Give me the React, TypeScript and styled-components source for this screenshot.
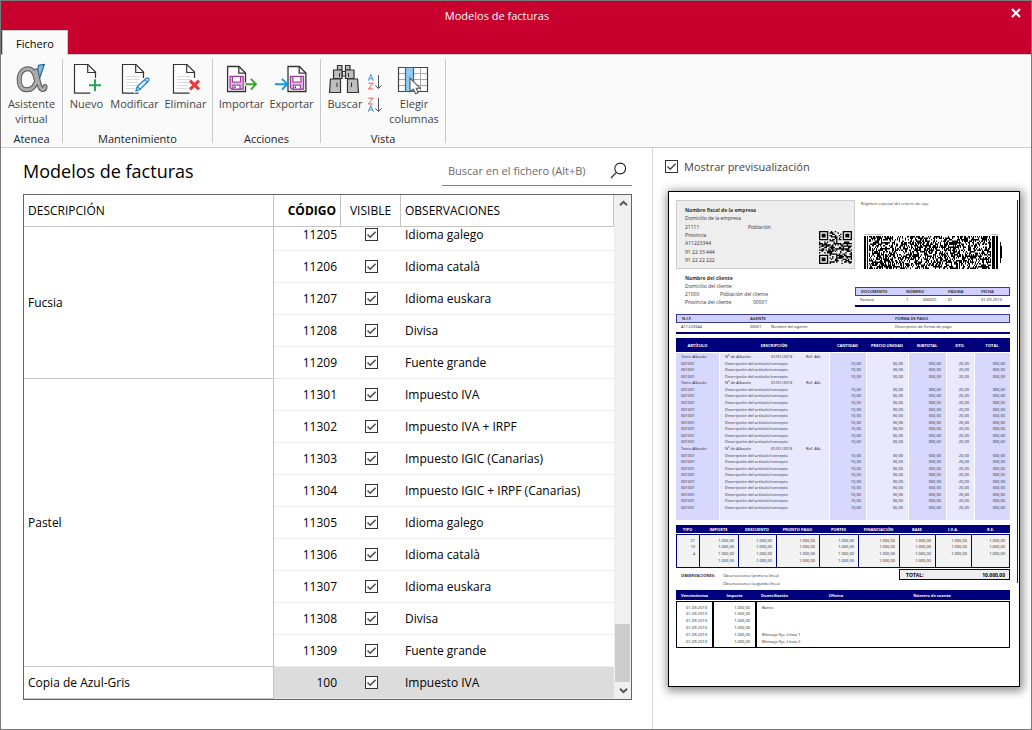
import React, { useLayoutEffect, useRef, useState } from "react";
import styled, { createGlobalStyle, css } from "styled-components";

const GlobalStyle = createGlobalStyle`
  *, *::before, *::after { box-sizing: border-box; }
  body { margin: 0; background: #fff; }
  body, button, input { font-family: "Open Sans", "Noto Sans", sans-serif; font-size: 11px; }
`;

/* ---------- window ---------- */

const Window = styled.div`
  display: flex;
  flex-direction: column;
  height: 100vh;
  border: 1px solid #7a7a7a;
  background: #fff;
  color: #000;
`;

const TitleBar = styled.header`
  display: grid;
  grid-template-columns: 30px 1fr 30px;
  align-items: center;
  height: 29px;
  background: #c8002d;
  color: #fff;
`;

const WindowTitle = styled.div`
  grid-column: 2;
  text-align: center;
  padding-right: 38px;
`;

const CloseButton = styled.button`
  display: flex;
  align-items: center;
  justify-content: center;
  height: 23px;
  padding: 0;
  border: 0;
  background: none;
  align-self: start;
`;

const TabStrip = styled.nav`
  display: flex;
  height: 24px;
  padding-left: 1px;
  background: #c8002d;
`;

const Tab = styled.button`
  width: 66px;
  height: 25px;
  padding: 0;
  border: 1px solid #c8c8c8;
  border-bottom: 0;
  background: #fafafa;
  color: #000;
  z-index: 1;
`;

/* ---------- ribbon ---------- */

const Ribbon = styled.div`
  display: flex;
  height: 94px;
  padding: 4px 0;
  border-top: 1px solid #c8c8c8;
  border-bottom: 1px solid #c8c8c8;
  background: #fafafa;
`;

const Group = styled.section<{ $width: number }>`
  display: flex;
  flex-direction: column;
  justify-content: space-between;
  width: ${(p) => p.$width}px;
  border-right: 1px solid #c8c8c8;
`;

const GroupTools = styled.div`
  display: flex;
  justify-content: center;
  padding-top: 3px;
`;

const GroupCaption = styled.div`
  text-align: center;
  line-height: 8px;
  color: #222;
`;

const ToolButton = styled.button<{ $width: number }>`
  display: flex;
  flex-direction: column;
  align-items: center;
  gap: 2px;
  flex: none;
  width: ${(p) => p.$width}px;
  padding: 0;
  border: 0;
  background: none;
  color: #444;
  line-height: 15px;
  white-space: pre-line;
`;

const SortTools = styled.div`
  display: flex;
  flex-direction: column;
  gap: 7px;
  width: 16px;
  padding-top: 12px;
`;

const SortButton = styled.button`
  height: 16px;
  padding: 0;
  border: 0;
  background: none;
  line-height: 0;
`;

/* ---------- body ---------- */

const Body = styled.main`
  display: grid;
  grid-template-columns: minmax(0, 1fr) 378px;
  flex: 1;
  min-height: 0;
`;

const ListPane = styled.section`
  display: flex;
  flex-direction: column;
  min-height: 0;
  padding: 8px 20px 29px 22px;
  border-right: 1px solid #d8d8d8;
`;

const ListHeader = styled.div`
  display: flex;
  justify-content: space-between;
  height: 38px;
`;

const Heading = styled.h1`
  margin: 0;
  font-size: 18px;
  font-weight: 400;
  line-height: 31px;
`;

const SearchBox = styled.label`
  display: flex;
  align-items: center;
  width: 190px;
  height: 30px;
  padding: 0 5px 0 6px;
  border-bottom: 1px solid #808080;
`;

const SearchInput = styled.input`
  flex: 1;
  min-width: 0;
  padding: 0;
  border: 0;
  outline: 0;
  background: none;
  &::placeholder { color: #6a6a6a; opacity: 1; }
`;

const ListFrame = styled.div`
  display: flex;
  flex: 1;
  min-height: 0;
  border: 1px solid #646464;
`;

const Scroller = styled.div`
  flex: 1;
  min-width: 0;
  overflow-y: auto;
  scrollbar-width: none;
`;

const ModelTable = styled.table`
  width: 100%;
  table-layout: fixed;
  border-collapse: separate;
  border-spacing: 0;
  font-size: 12px;
`;

const HeadCell = styled.th<{ $align?: string; $strong?: boolean }>`
  position: sticky;
  top: 0;
  z-index: 1;
  height: 32px;
  padding: 0 4px;
  border-right: 1px solid #c4c4c4;
  border-bottom: 1px solid #c4c4c4;
  background: #fff;
  text-align: ${(p) => p.$align || "left"};
  font-weight: ${(p) => (p.$strong ? 700 : 400)};
`;

const GroupCell = styled.td`
  padding: 0 4px;
  border-right: 1px solid #c4c4c4;
  border-bottom: 1px solid #c4c4c4;
  background: #fff;
`;

const Row = styled.tr<{ $selected?: boolean }>`
  background: ${(p) => (p.$selected ? "#dcdcdc" : "#fff")};
`;

const Cell = styled.td<{ $align?: string }>`
  height: 32px;
  padding: 0 4px;
  border-bottom: 1px solid #ececec;
  text-align: ${(p) => p.$align || "left"};
  line-height: 16px;
`;

const Check = styled.input.attrs({ type: "checkbox" })`
  appearance: none;
  display: block;
  flex: none;
  width: 13px;
  height: 13px;
  margin: 0;
  border: 1px solid #333;
  background: #fff;
  ${Cell} & { margin: 0 auto; }
  &:checked {
    background: #fff
      url("data:image/svg+xml,%3Csvg xmlns='http://www.w3.org/2000/svg' viewBox='0 0 11 11'%3E%3Cpath d='M1.5 5.5l2.7 2.8 5.4-5.6' fill='none' stroke='%23444' stroke-width='1.4'/%3E%3C/svg%3E")
      center / 11px 11px no-repeat;
  }
`;

const ScrollBar = styled.div`
  display: flex;
  flex-direction: column;
  width: 17px;
  padding-left: 1px;
  background: #f0f0f0;
`;

const ScrollArrow = styled.button`
  height: 17px;
  padding: 0;
  border: 0;
  background: none;
  line-height: 0;
`;

const ScrollTrack = styled.div`
  display: flex;
  flex: 1;
  align-items: flex-end;
`;

const ScrollThumb = styled.div`
  width: 15px;
  height: 58px;
  background: #cdcdcd;
`;

/* ---------- preview ---------- */

const PreviewPane = styled.section`
  padding: 8px 11px 12px 12px;
  overflow: hidden;
`;

const PreviewToggle = styled.label`
  display: flex;
  align-items: center;
  gap: 6px;
  height: 20px;
  margin-bottom: 15px;
  color: #444;
`;

const Sheet = styled.article`
  display: flex;
  gap: 7px;
  margin-left: 3px;
  padding: 8px 1px 38px 7px;
  border: 1px solid #000;
  background: #fff;
  box-shadow: 1px 2px 9px 2px rgba(0, 0, 0, 0.45);
  font-size: 4px;
  line-height: 6px;
  color: #333;
  td { font-family: "Noto Sans", "Open Sans", sans-serif; }
`;

const SheetContent = styled.div`
  flex: 1;
  min-width: 0;
`;

const SheetRule = styled.div`
  width: 1px;
  height: 383px;
  background: #222;
`;

const Split = styled.div`
  display: grid;
  grid-template-columns: 179px minmax(0, 1fr);
`;

const CompanyBox = styled.div`
  display: flex;
  justify-content: space-between;
  align-items: flex-end;
  height: 69px;
  padding: 5px 2px 4px 8px;
  border: 1px solid #ccc;
  background: #eee;
`;

const Lines = styled.div`
  display: flex;
  flex-direction: column;
  font-size: 5px;
  line-height: 8px;
`;

const Pair = styled.div<{ $first: number }>`
  display: grid;
  grid-template-columns: ${(p) => p.$first}px auto;
`;

const CompanyLines = styled(Lines)`
  height: 100%;
  justify-content: space-between;
`;

const TaxSide = styled.div`
  display: flex;
  flex-direction: column;
  justify-content: space-between;
  height: 69px;
  padding: 1px 8px 0 6px;
`;

const CodeCaption = styled.div`
  display: flex;
  justify-content: space-between;
  height: 3px;
  padding-right: 4px;
  font-size: 2px;
  line-height: 3px;
`;

const CodeBlock = styled.div`
  padding-left: 3px;
  svg { display: block; }
`;

const ClientLines = styled(Lines)`
  padding: 5px 0 0 9px;
`;

const BoxTable = styled.table`
  width: 100%;
  table-layout: fixed;
  border-collapse: separate;
  border-spacing: 0;
  font-size: 4px;
  line-height: 6px;
  border-bottom: 2px solid #00007c;
  th {
    height: 9px;
    padding: 0;
    border: solid #3a3aa0;
    border-width: 1px 0;
    background: #d0d0ff;
    text-align: left;
  }
  th:first-child { border-left-width: 1px; }
  th:last-child { border-right-width: 1px; }
  td { height: 9px; padding: 0 1px 2px 0; }
  th:first-child, td:first-child { padding-left: 5px; }
`;

const DocumentBox = styled.div`
  padding-top: 18px;
`;

const PartyBox = styled.div`
  padding: 7px 0 4px;
`;

const navyHead = css`
  background: #00007c;
  color: #fff;
  font-weight: 700;
`;

const ItemTable = styled.table`
  width: 100%;
  height: 182px;
  table-layout: fixed;
  border-collapse: separate;
  border-spacing: 0;
  font-size: 4px;
  line-height: 5px;
  thead th { ${navyHead} height: 14px; padding: 0; }
  td { padding: 0 5px; text-align: right; white-space: nowrap; border-left: 1px solid #fff; }
  td:first-child { border-left: 0; }
  td:nth-child(odd) { background: #d8d8ff; }
  td:nth-child(even) { background: #e8e8ff; }
  td:nth-child(-n + 2) { text-align: left; }
  tbody tr:first-child td { border-top: 1px solid #fff; }
  tfoot td { height: 9px; }
`;

const NoteText = styled.div`
  display: grid;
  grid-template-columns: 46px 35px auto;
`;

const TotalsTable = styled.table`
  width: 100%;
  margin-top: 5px;
  table-layout: fixed;
  border-collapse: separate;
  border-spacing: 0;
  font-size: 4px;
  line-height: 5px;
  thead th { ${navyHead} height: 9px; padding: 0; border-bottom: 1px solid #fff; }
  td {
    height: 7px;
    padding: 0 4px;
    text-align: right;
    background: #f3f3f3;
    border-left: 1px solid #00007c;
  }
  td:last-child { border-right: 1px solid #00007c; }
  tbody tr:first-child td { height: 9px; padding-top: 2px; border-top: 1px solid #00007c; }
  tbody tr:last-child td { height: 11px; padding-bottom: 3px; border-bottom: 1px solid #00007c; }
`;

const Summary = styled.div`
  display: grid;
  grid-template-columns: 5px 42px minmax(0, 1fr) 111px;
  height: 21px;
  margin-top: 1px;
`;

const SummaryText = styled.div`
  padding-top: 3px;
  line-height: 8px;
`;

const TotalBox = styled.div`
  display: flex;
  justify-content: space-between;
  align-items: center;
  height: 11px;
  padding: 0 4px 0 6px;
  border: 1px solid #00007c;
  background: #eee;
  color: #000;
  font-size: 5px;
  font-weight: 700;
`;

const DueTable = styled.table`
  width: 100%;
  table-layout: fixed;
  border-collapse: separate;
  border-spacing: 0;
  font-size: 4px;
  line-height: 5px;
  thead th { ${navyHead} height: 11px; padding: 0; border-bottom: 1px solid #fff; }
  thead th:nth-child(3) { text-align: left; padding-left: 5px; }
  td { height: 7px; padding: 0 5px; border-left: 1px solid #000; white-space: nowrap; }
  td:nth-child(-n + 2) { border-right: 1px solid #000; text-align: right; }
  td:nth-child(n + 4) { border-left: 0; }
  td:last-child { border-right: 1px solid #000; }
  tbody tr:first-child td { height: 9px; padding-top: 2px; border-top: 1px solid #000; }
  tbody tr:last-child td { height: 10px; padding-bottom: 3px; border-bottom: 1px solid #000; }
`;

/* ---------- icons ---------- */

const Icon = ({ children }: { children: React.ReactNode }) => (
  <svg width="32" height="32" viewBox="1 0 32 32" fill="none" overflow="visible" aria-hidden="true">
    {children}
  </svg>
);

const Page = ({ lines }: { lines?: boolean }) => (
  <>
    <path d="M4.5 2.5H18L25.5 10V31.2H4.5Z" fill="#fff" />
    <path d="M25.5 16V10L18 2.5H4.5V31.2H20.5" stroke="#333" strokeWidth="1.2" />
    <path d="M17.7 2.8V10.5H25.4" stroke="#333" strokeWidth="1.2" />
    {lines && <path d="M8 14.5H22M8 17.5H22M8 20.5H20M8 23.5H18M8 26.5H18" stroke="#dcdcdc" />}
  </>
);

const alphaStroke =
  "M21 9C24 22 24.5 28 28.6 27.4 29.6 27 30 26 30 24.5M22.5 16C20.5 24.5 16 28 11.5 27.8 6 27.6 4 23 4.2 17.5 4.4 10.5 8.2 6.8 13 6.8 18 6.8 20 12 21 17";

const AlphaIcon = () => (
  <Icon>
    <path d="M29.3 2.5L23.8 18.5 21.8 13 23.5 3.2Z" fill="#7dbcf0" stroke="#1b5c98" strokeWidth="1.1" />
    <g strokeLinecap="round" strokeLinejoin="round">
      <path d={alphaStroke} stroke="#555" strokeWidth="5" />
      <path d={alphaStroke} stroke="#ababab" strokeWidth="3" />
    </g>
  </Icon>
);

const NewIcon = () => (
  <Icon>
    <Page />
    <path d="M25 17V29.5M19 23.2H31.2" stroke="#fafafa" strokeWidth="4" />
    <path d="M25 17.3V29.2M19 23.2H31" stroke="#18a74c" strokeWidth="1.9" />
  </Icon>
);

const EditIcon = () => (
  <Icon>
    <Page lines />
    <path d="M18 29L19.3 24.3 28.3 16.3Q30.3 15.5 31 17.3 31.2 18.6 30 19.6L22 27.5Z" fill="#fff" stroke="#fafafa" strokeWidth="3" />
    <path d="M18 29L19.3 24.3 28.3 16.3Q30.3 15.5 31 17.3 31.2 18.6 30 19.6L22 27.5Z" fill="#d9ecfa" stroke="#2486c8" strokeWidth="1.3" />
    <path d="M19.3 24.3L22.3 27.5M27 17.8L29.5 20.3" stroke="#2486c8" strokeWidth="1.2" />
  </Icon>
);

const DeleteIcon = () => (
  <Icon>
    <Page lines />
    <path d="M21 18.5L30 27.5M30 18.5L21 27.5" stroke="#fafafa" strokeWidth="5" />
    <path d="M21 18.6L30 27.4M30 18.6L21 27.4" stroke="#ee3a38" strokeWidth="3.2" />
  </Icon>
);

const DiskPage = () => (
  <>
    <path d="M.6 4.5H12L18.5 11V29.5H.6Z" fill="#fff" stroke="#333" strokeWidth="1.3" />
    <path d="M11.8 4.8V11.2H18.3" stroke="#333" strokeWidth="1.3" />
    <path d="M3 14.3H16.2V27.2H4.5L3 25.7Z" fill="#deb5e0" stroke="#9a3d9d" strokeWidth="1.2" />
    <path d="M5.5 14.5H13.5V20H5.5Z" fill="#fff" stroke="#9a3d9d" strokeWidth="1.1" />
    <path d="M6 23.2H13V27H6Z" fill="#fff" stroke="#9a3d9d" strokeWidth="1.1" />
    <path d="M8 24.5V26" stroke="#333" strokeWidth="1.3" />
  </>
);

const ImportIcon = () => (
  <Icon>
    <g transform="translate(2 0)"><DiskPage /></g>
    <path d="M19.5 22.2H31M25.8 16.8L31 22.2 25.8 27.6" stroke="#fafafa" strokeWidth="3.6" />
    <path d="M20.5 22.2H31M25.8 16.8L31 22.2 25.8 27.6" stroke="#3aa428" strokeWidth="1.9" />
  </Icon>
);

const ExportIcon = () => (
  <Icon>
    <g transform="translate(12.4 0)"><DiskPage /></g>
    <path d="M0 22.2H12.5M7 16.8L12.3 22.2 7 27.6" stroke="#0a9be0" strokeWidth="1.9" />
  </Icon>
);

const BinocularsIcon = () => (
  <Icon>
    <g fill="#bfbfbf" stroke="#333" strokeWidth="1.2">
      <path d="M9.5 3.5H14V8H9.5ZM17.5 3.5H22V8H17.5Z" />
      <path d="M14.5 9.5H17.5V14H14.5Z" fill="#fff" />
      <path d="M5.5 8H14V16.5H5.5ZM17.5 8H26V16.5H17.5Z" />
      <path d="M2.5 17H12.5V30.5H1.5ZM19.5 17H29.5L30.5 30.5H19.5Z" />
    </g>
    <path d="M11.5 11V15M20.5 11V15M9 20.5V25M23.5 20.5V25" stroke="#333" />
  </Icon>
);

const ColumnsIcon = () => (
  <Icon>
    <path d="M1.5 5.5H30.5V29.5H1.5Z" fill="#fff" />
    <path d="M1.5 11.5H30.5M1.5 17.5H30.5M1.5 23.5H30.5M23.5 5.5V29.5" stroke="#a8a8a8" />
    <path d="M1.5 5.5H30.5V29.5H1.5Z" stroke="#444" strokeWidth="1.2" />
    <path d="M8.5 5.5H16.5V29.5H8.5Z" fill="#93c9f0" stroke="#1b6ead" strokeWidth="1.2" />
    <path d="M13 16V29.8L16.2 27 18.7 31.8 21.3 30.5 19.2 26.2H23.2Z" fill="#fff" stroke="#555" strokeWidth="1.1" />
  </Icon>
);

const SortIcon = ({ descending }: { descending?: boolean }) => (
  <svg width="16" height="16" viewBox="1 0 16 16" fill="none" aria-hidden="true">
    <path d="M1.2 6.8L3.8.6 6.5 6.8M2.1 4.8H5.5" stroke="#3d93cf" transform={descending ? "translate(0 8)" : undefined} />
    <path d="M1.4 9.2H6.1L1.4 15H6.3" stroke="#e85c5c" transform={descending ? "translate(0 -8)" : undefined} />
    <path d="M11.5 1V14.5M8.3 11.3L11.5 14.5 14.7 11.3" stroke="#555" />
  </svg>
);

const SearchIcon = () => (
  <svg width="17" height="17" viewBox="0 0 17 17" fill="none" stroke="#222" strokeWidth="1.1" aria-hidden="true">
    <circle cx="10.2" cy="6.5" r="5.4" />
    <path d="M6.4 10.4L1 16" />
  </svg>
);

const Chevron = ({ up }: { up?: boolean }) => (
  <svg width="9" height="9" viewBox="0 0 9 9" fill="none" stroke="#555" strokeWidth="2" aria-hidden="true">
    <path d={up ? "M1 6.2L4.5 2.8 8 6.2" : "M1 2.8L4.5 6.2 8 2.8"} />
  </svg>
);

/* deterministic module noise for the two printed codes */
const noise = (seed: number) => {
  let s = seed;
  return () => {
    s = (s * 1103515245 + 12345) % 2147483648;
    return s / 2147483648;
  };
};

const qrPath = (() => {
  const rnd = noise(7);
  const n = 25;
  let d = "";
  const finder = (x: number, y: number) => (x < 8 && y < 8) || (x > n - 9 && y < 8) || (x < 8 && y > n - 9);
  for (let y = 0; y < n; y++)
    for (let x = 0; x < n; x++) if (rnd() > 0.48 && !finder(x, y)) d += `M${x} ${y}h1v1h-1z`;
  [[0, 0], [n - 7, 0], [0, n - 7]].forEach(([x, y]) => {
    d += `M${x} ${y}h7v7h-7zM${x + 1} ${y + 1}v5h5v-5zM${x + 2} ${y + 2}h3v3h-3z`;
  });
  return d;
})();

const QrCode = () => (
  <svg width="33" height="33" viewBox="0 0 25 25" role="img" aria-label="QR"><path d={qrPath} /></svg>
);

const stackedPath = (() => {
  const rnd = noise(21);
  let d = "M0 0h2v33h-2zM3 0h1v33h-1zM128 0h3v33h-3zM132 0h2v33h-2zM136 6h1v21h-1zM137 10h1v12h-1z";
  for (let y = 0; y < 33; y += 1.5)
    for (let x = 5; x < 127; x++) if (rnd() > 0.46) d += `M${x} ${y}h1v1.5h-1z`;
  return d;
})();

const StackedCode = () => (
  <svg width="100%" height="33" viewBox="0 0 138 33" preserveAspectRatio="none" role="img" aria-label="Código">
    <path d={stackedPath} />
  </svg>
);

/* ---------- data ---------- */

type Model = { code: string; note: string; selected?: boolean };
const groups: { name: string; models: Model[] }[] = [
  {
    name: "Fucsia",
    models: [
      { code: "11205", note: "Idioma galego" },
      { code: "11206", note: "Idioma català" },
      { code: "11207", note: "Idioma euskara" },
      { code: "11208", note: "Divisa" },
      { code: "11209", note: "Fuente grande" },
    ],
  },
  {
    name: "Pastel",
    models: [
      { code: "11301", note: "Impuesto IVA" },
      { code: "11302", note: "Impuesto IVA + IRPF" },
      { code: "11303", note: "Impuesto IGIC (Canarias)" },
      { code: "11304", note: "Impuesto IGIC + IRPF (Canarias)" },
      { code: "11305", note: "Idioma galego" },
      { code: "11306", note: "Idioma català" },
      { code: "11307", note: "Idioma euskara" },
      { code: "11308", note: "Divisa" },
      { code: "11309", note: "Fuente grande" },
    ],
  },
  { name: "Copia de Azul-Gris", models: [{ code: "100", note: "Impuesto IVA", selected: true }] },
];

const itemBlocks = [3, 9, 9];
const totals = [
  ["21", "10", "4", ""],
  ...Array.from({ length: 6 }, () => Array(4).fill("1.000,00")),
  ["1.000,00", "1.000,00", "1.000,00", ""],
  ["1.000,00", "1.000,00", "1.000,00", ""],
];
const totalHeads = ["TIPO", "IMPORTE", "DESCUENTO", "PRONTO PAGO", "PORTES", "FINANCIACIÓN", "BASE", "I.V.A.", "R.E."];
const dueNotes = ["Banco", "", "", "", "Mensaje fijo. Línea 1", "Mensaje fijo. Línea 2"];

const Columns = ({ widths }: { widths: (number | undefined)[] }) => (
  <colgroup>{widths.map((w, i) => <col key={i} width={w} />)}</colgroup>
);

/* ---------- parts ---------- */

const ModelList = () => {
  const scroller = useRef<HTMLDivElement>(null);
  const [hidden, setHidden] = useState(0);

  useLayoutEffect(() => {
    const el = scroller.current!;
    el.scrollTop = el.scrollHeight;
    setHidden(el.scrollTop);
  }, []);

  return (
    <ListFrame>
      <Scroller ref={scroller} onScroll={(e) => setHidden(e.currentTarget.scrollTop)}>
        <ModelTable>
          <Columns widths={[250, 67, 60, undefined]} />
          <thead>
            <tr>
              <HeadCell>DESCRIPCIÓN</HeadCell>
              <HeadCell $align="right" $strong>CÓDIGO</HeadCell>
              <HeadCell $align="center">VISIBLE</HeadCell>
              <HeadCell>OBSERVACIONES</HeadCell>
            </tr>
          </thead>
          <tbody>
            {groups.map((g, gi) =>
              g.models.map((m, i) => (
                <Row key={m.code} $selected={m.selected}>
                  {i === 0 && (
                    <GroupCell
                      rowSpan={g.models.length}
                      style={gi === 0 ? { paddingTop: Math.min(hidden, 140) } : undefined}
                    >
                      {g.name}
                    </GroupCell>
                  )}
                  <Cell $align="right">{m.code}</Cell>
                  <Cell><Check defaultChecked aria-label={`Visible ${m.code}`} /></Cell>
                  <Cell>{m.note}</Cell>
                </Row>
              ))
            )}
          </tbody>
        </ModelTable>
      </Scroller>
      <ScrollBar>
        <ScrollArrow aria-label="Subir"><Chevron up /></ScrollArrow>
        <ScrollTrack><ScrollThumb /></ScrollTrack>
        <ScrollArrow aria-label="Bajar"><Chevron /></ScrollArrow>
      </ScrollBar>
    </ListFrame>
  );
};

const Invoice = () => (
  <Sheet>
    <SheetContent>
      <Split>
        <CompanyBox>
          <CompanyLines>
            <b>Nombre fiscal de la empresa</b>
            <span>Domicilio de la empresa</span>
            <Pair $first={63}><span>21111</span><span>Población</span></Pair>
            <span>Provincia</span>
            <span>A11223344</span>
            <span>91 22 33 444</span>
            <span>91 22 22 222</span>
          </CompanyLines>
          <QrCode />
        </CompanyBox>
        <TaxSide>
          <span>Régimen especial del criterio de caja</span>
          <CodeBlock>
            <CodeCaption><span>Código de la factura</span><span>00 00 0</span></CodeCaption>
            <StackedCode />
          </CodeBlock>
        </TaxSide>
      </Split>
      <Split>
        <ClientLines>
          <b>Nombre del cliente</b>
          <span>Domicilio del cliente</span>
          <Pair $first={35}><span>21000</span><span>Población del cliente</span></Pair>
          <Pair $first={68}><span>Provincia del cliente</span><span>00001</span></Pair>
        </ClientLines>
        <DocumentBox>
          <BoxTable>
            <Columns widths={[51, 17, 25, 33, undefined]} />
            <thead>
              <tr><th>DOCUMENTO</th><th colSpan={2}>NÚMERO</th><th>PÁGINA</th><th>FECHA</th></tr>
            </thead>
            <tbody>
              <tr><td>Factura</td><td>1</td><td>000001</td><td>01</td><td>01-09-2013</td></tr>
            </tbody>
          </BoxTable>
        </DocumentBox>
      </Split>
      <PartyBox>
        <BoxTable>
          <Columns widths={[74, 21, 124, undefined]} />
          <thead>
            <tr><th>N.I.F.</th><th colSpan={2}>AGENTE</th><th>FORMA DE PAGO</th></tr>
          </thead>
          <tbody>
            <tr><td>A11223344</td><td>00001</td><td>Nombre del agente</td><td>Descripción de forma de pago</td></tr>
          </tbody>
        </BoxTable>
      </PartyBox>
      <ItemTable>
        <Columns widths={[43, undefined, 37, 42, 38, 28, 36]} />
        <thead>
          <tr>
            <th>ARTÍCULO</th><th>DESCRIPCIÓN</th><th>CANTIDAD</th><th>PRECIO UNIDAD</th>
            <th>SUBTOTAL</th><th>DTO.</th><th>TOTAL</th>
          </tr>
        </thead>
        <tbody>
          {itemBlocks.map((count, b) => (
            <React.Fragment key={b}>
              <tr>
                <td>Texto Albarán</td>
                <td><NoteText><span>Nº de Albarán</span><span>01/01/2013</span><span>Ref. Alb.</span></NoteText></td>
                <td /><td /><td /><td /><td />
              </tr>
              {Array.from({ length: count }, (_, i) => (
                <tr key={i}>
                  <td>001001</td><td>Descripción del artículo/concepto</td><td>10,00</td><td>30,00</td>
                  <td>300,00</td><td>20,00</td><td>300,00</td>
                </tr>
              ))}
            </React.Fragment>
          ))}
        </tbody>
        <tfoot><tr><td /><td /><td /><td /><td /><td /><td /></tr></tfoot>
      </ItemTable>
      <TotalsTable>
        <Columns widths={[23, 39, 38, 43, 39, 41, 36, 36, undefined]} />
        <thead><tr>{totalHeads.map((h) => <th key={h}>{h}</th>)}</tr></thead>
        <tbody>
          {[0, 1, 2, 3].map((r) => <tr key={r}>{totals.map((c, i) => <td key={i}>{c[r]}</td>)}</tr>)}
        </tbody>
      </TotalsTable>
      <Summary>
        <span />
        <SummaryText><b>OBSERVACIONES:</b></SummaryText>
        <SummaryText>Observaciones (primera línea)<br />Observaciones (segunda línea)</SummaryText>
        <TotalBox><span>TOTAL:</span><span>10.000,00</span></TotalBox>
      </Summary>
      <DueTable>
        <Columns widths={[37, 43, 62, 36, undefined]} />
        <thead>
          <tr><th>Vencimientos</th><th>Importe</th><th>Domiciliación</th><th>Oficina</th><th>Número de cuenta</th></tr>
        </thead>
        <tbody>
          {dueNotes.map((n, i) => (
            <tr key={i}><td>01-09-2013</td><td>1.000,00</td><td>{n}</td><td /><td /></tr>
          ))}
        </tbody>
      </DueTable>
    </SheetContent>
    <SheetRule />
  </Sheet>
);

export default function App() {
  return (
    <>
      <GlobalStyle />
      <Window>
        <TitleBar>
          <WindowTitle>Modelos de facturas</WindowTitle>
          <CloseButton aria-label="Cerrar">
            <svg width="10" height="10" viewBox="0 0 10 10" stroke="#fff" strokeWidth="2.2" aria-hidden="true">
              <path d="M1 1L9 9M9 1L1 9" />
            </svg>
          </CloseButton>
        </TitleBar>
        <TabStrip><Tab>Fichero</Tab></TabStrip>
        <Ribbon>
          <Group $width={62}>
            <GroupTools><ToolButton $width={56}><AlphaIcon />{"Asistente\nvirtual"}</ToolButton></GroupTools>
            <GroupCaption>Atenea</GroupCaption>
          </Group>
          <Group $width={150}>
            <GroupTools>
              <ToolButton $width={42}><NewIcon />Nuevo</ToolButton>
              <ToolButton $width={54}><EditIcon />Modificar</ToolButton>
              <ToolButton $width={48}><DeleteIcon />Eliminar</ToolButton>
            </GroupTools>
            <GroupCaption>Mantenimiento</GroupCaption>
          </Group>
          <Group $width={108}>
            <GroupTools>
              <ToolButton $width={50}><ImportIcon />Importar</ToolButton>
              <ToolButton $width={50}><ExportIcon />Exportar</ToolButton>
            </GroupTools>
            <GroupCaption>Acciones</GroupCaption>
          </Group>
          <Group $width={125}>
            <GroupTools>
              <ToolButton $width={46}><BinocularsIcon />Buscar</ToolButton>
              <SortTools>
                <SortButton aria-label="Orden ascendente"><SortIcon /></SortButton>
                <SortButton aria-label="Orden descendente"><SortIcon descending /></SortButton>
              </SortTools>
              <ToolButton $width={60}><ColumnsIcon />{"Elegir\ncolumnas"}</ToolButton>
            </GroupTools>
            <GroupCaption>Vista</GroupCaption>
          </Group>
        </Ribbon>
        <Body>
          <ListPane>
            <ListHeader>
              <Heading>Modelos de facturas</Heading>
              <SearchBox>
                <SearchInput placeholder="Buscar en el fichero (Alt+B)" aria-label="Buscar en el fichero" />
                <SearchIcon />
              </SearchBox>
            </ListHeader>
            <ModelList />
          </ListPane>
          <PreviewPane>
            <PreviewToggle><Check defaultChecked />Mostrar previsualización</PreviewToggle>
            <Invoice />
          </PreviewPane>
        </Body>
      </Window>
    </>
  );
}
